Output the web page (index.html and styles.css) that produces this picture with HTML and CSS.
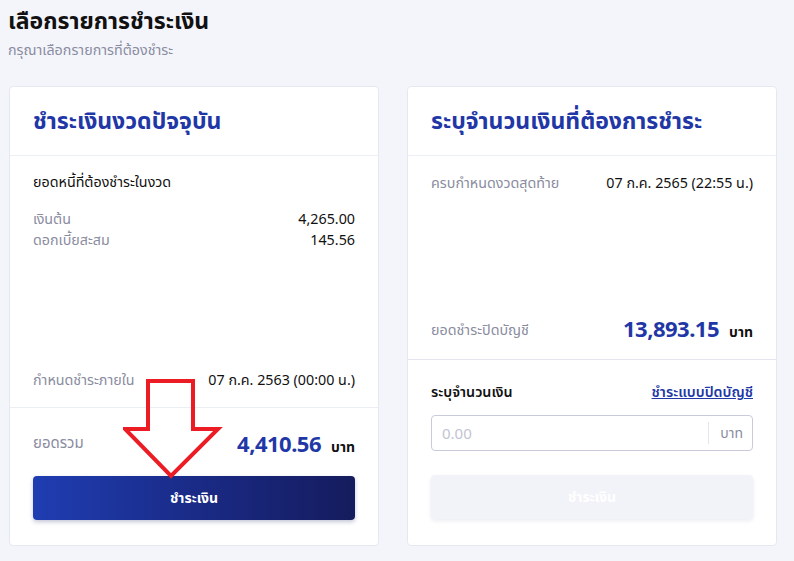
FILE: index.html
```html
<!DOCTYPE html>
<html lang="th">
<head>
<meta charset="utf-8">
<link rel="stylesheet" href="styles.css">
</head>
<body>
<div class="page">
  <h1 class="title">เลือกรายการชำระเงิน</h1>
  <p class="subtitle">กรุณาเลือกรายการที่ต้องชำระ</p>
  <div class="cards">
    <section class="card">
      <div class="card-head"><h2>ชำระเงินงวดปัจจุบัน</h2></div>
      <div class="card-body left-body">
        <div class="section-label">ยอดหนี้ที่ต้องชำระในงวด</div>
        <div class="row first"><span class="muted">เงินต้น</span><span>4,265.00</span></div>
        <div class="row"><span class="muted">ดอกเบี้ยสะสม</span><span>145.56</span></div>
        <div class="spacer"></div>
        <div class="row"><span class="muted">กำหนดชำระภายใน</span><span>07 ก.ค. 2563 (00:00 น.)</span></div>
      </div>
      <div class="card-foot left-foot">
        <div class="total-row"><span class="muted">ยอดรวม</span><span class="amount"><b>4,410.56</b><i>บาท</i></span></div>
        <button class="btn primary">ชำระเงิน</button>
        <svg class="arrow" width="100" height="104" viewBox="0 0 100 104">
          <polygon points="25,2 70,2 70,50 95,50 48,97 2,50 25,50" fill="none" stroke="#ec1c24" stroke-width="4" stroke-linejoin="miter"/>
        </svg>
      </div>
    </section>
    <section class="card">
      <div class="card-head"><h2>ระบุจำนวนเงินที่ต้องการชำระ</h2></div>
      <div class="card-body right-body">
        <div class="row"><span class="muted">ครบกำหนดงวดสุดท้าย</span><span>07 ก.ค. 2565 (22:55 น.)</span></div>
        <div class="spacer"></div>
        <div class="total-row closing"><span class="muted">ยอดชำระปิดบัญชี</span><span class="amount"><b>13,893.15</b><i>บาท</i></span></div>
      </div>
      <div class="card-foot right-foot">
        <div class="row"><span class="field-label">ระบุจำนวนเงิน</span><a class="link" href="#">ชำระแบบปิดบัญชี</a></div>
        <div class="input">
          <span class="placeholder">0.00</span>
          <span class="unit">บาท</span>
        </div>
        <button class="btn disabled">ชำระเงิน</button>
      </div>
    </section>
  </div>
</div>
</body>
</html>
```
FILE: styles.css
```css
* { box-sizing: border-box; }
html, body { margin: 0; padding: 0; }
body {
  background: #f4f5fb;
  font-family: "Noto Sans", "Noto Sans Thai", "Noto Sans Thai UI", sans-serif;
  color: #111;
  width: 794px;
  height: 561px;
  overflow: hidden;
}
.page { padding: 4px 0 0 9px; position: relative; }
.title {
  margin: 0 0 0 -1px;
  font-size: 23px;
  line-height: 32px;
  font-weight: 700;
  color: #111;
}
.subtitle {
  margin: 3px 0 0 -1px;
  font-size: 14.3px;
  line-height: 22px;
  color: #8a8ca0;
}
.cards {
  display: grid;
  grid-template-columns: 370px 370px;
  gap: 28px;
  margin-top: 25px;
}
.card {
  background: #fff;
  border: 1px solid #e6e8f1;
  border-radius: 4px;
  display: flex;
  flex-direction: column;
}
.card-head {
  height: 69px;
  border-bottom: 1px solid #eceef5;
  padding: 0 23px;
  display: flex;
  align-items: center;
}
.card-head h2 {
  margin: 0;
  font-size: 23px;
  font-weight: 700;
  color: #2237a6;
  line-height: 32px;
  padding-bottom: 2px;
}
.card-body { padding: 16px 23px 0; display: flex; flex-direction: column; }
.left-body { height: 252px; border-bottom: 1px solid #eceef5; padding-bottom: 17px; }
.right-body { height: 204px; border-bottom: 1px solid #e3e4ee; padding-bottom: 16px; }
.spacer { flex: 1; }
.section-label { font-size: 14.3px; line-height: 20px; }
.row {
  display: flex;
  justify-content: space-between;
  align-items: center;
  font-size: 14.3px;
  line-height: 21px;
}
.row.first { margin-top: 16px; }
.muted { color: #8a8ca0; }
.total-row {
  display: flex;
  justify-content: space-between;
  align-items: center;
}
.total-row .muted { font-size: 15px; }
.total-row.closing .muted { font-size: 14.3px; margin-top: 4px; }
.amount { display: flex; align-items: baseline; }
.amount b {
  font-size: 22px;
  letter-spacing: -0.5px;
  font-weight: 700;
  color: #2237a6;
  line-height: 30px;
}
.amount i {
  font-style: normal;
  font-weight: 700;
  font-size: 14px;
  margin-left: 10px;
}
.card-foot { padding: 0 23px; position: relative; display: flex; flex-direction: column; }
.left-foot { padding-top: 20px; padding-bottom: 25px; }
.left-foot .total-row { margin-bottom: 18px; }
.right-foot { padding-top: 21px; }
.field-label { font-weight: 600; color: #111; }
.link {
  color: #2237a6;
  text-decoration: underline;
  font-weight: 600;
}
.btn {
  font-family: inherit;
  height: 44px;
  width: 100%;
  border: 0;
  border-radius: 4px;
  font-size: 14px;
  font-weight: 700;
  color: #fff;
}
.btn.primary {
  background: linear-gradient(90deg, #1f3db2 0%, #19277e 60%, #151c5d 100%);
  box-shadow: 0 2px 4px rgba(20, 30, 90, 0.25);
}
.btn.disabled {
  background: #f2f3f8;
  color: #fff;
  box-shadow: 0 2px 4px rgba(20, 30, 90, 0.08);
}
.input {
  margin-top: 13px;
  height: 36px;
  border: 1px solid #c9cbdc;
  border-radius: 4px;
  display: flex;
  align-items: center;
  padding: 0 0 0 10px;
  margin-bottom: 24px;
}
.placeholder { flex: 1; color: #c2c4d2; font-size: 15px; }
.unit {
  border-left: 1px solid #e3e4ec;
  height: 22px;
  line-height: 22px;
  padding: 0 9px 0 11px;
  color: #8a8ca0;
  font-size: 14px;
}
.arrow {
  position: absolute;
  left: 113px;
  top: -29px;
  pointer-events: none;
}
```
